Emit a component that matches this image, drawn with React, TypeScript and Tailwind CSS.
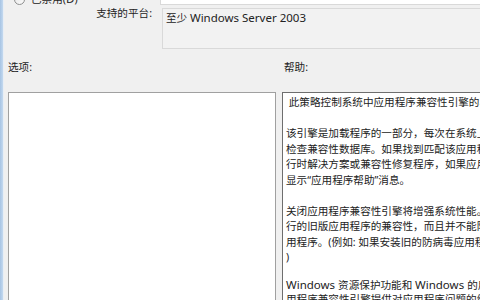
const helpLines = [
  ' 此策略控制系统中应用程序兼容性引擎的状态。',
  '',
  '该引擎是加载程序的一部分，每次在系统上启动应用程序时，该引擎',
  '检查兼容性数据库。如果找到匹配该应用程序的项，该引擎将提供运',
  '行时解决方案或兼容性修复程序，如果应用程序存在已知问题，则会',
  '显示“应用程序帮助”消息。',
  '',
  '关闭应用程序兼容性引擎将增强系统性能。但是，这将降低许多常用',
  '行的旧版应用程序的兼容性，而且并不能阻止安装已知不兼容的应',
  '用程序。(例如: 如果安装旧的防病毒应用程序，可能导致蓝屏错误',
  ')',
  '',
  'Windows 资源保护功能和 Windows 的用户帐户控制功能都使用应',
  '用程序兼容性引擎提供对应用程序问题的缓解。',
];

// latin runs are drawn a bit larger than the CJK text, like Segoe UI next to YaHei
function Mixed({ text }: { text: string }) {
  const parts = text.split(/([A-Za-z0-9][A-Za-z0-9 ]*)/);
  return (
    <>
      {parts.map((p, i) =>
        /^[A-Za-z0-9]/.test(p) ? (
          <span key={i} className="text-[11.5px]">
            {p}
          </span>
        ) : (
          <span key={i}>{p}</span>
        )
      )}
    </>
  );
}

export default function App() {
  return (
    <div
      className="w-[480px] h-[300px] overflow-hidden flex bg-[#f0f0f0] text-[10.6px] text-[#222]"
      style={{ fontFamily: "'Noto Sans', 'Noto Sans CJK SC', sans-serif" }}
    >
      {/* window frame edge */}
      <div className="w-[3px] shrink-0 bg-gradient-to-r from-[#a7c4e4] to-[#c4d9ef]" />
      <div className="w-px shrink-0 bg-[#e8eef5]" />

      <div className="flex-1 flex flex-col min-w-0">
        {/* top: radio + bottom of comment box */}
        <div className="h-[5px] flex">
          <div className="w-[156px] flex items-center gap-[6px] pl-[10px] -mt-[8px] h-[14px]">
            <span className="w-[11px] h-[11px] rounded-full border border-[#8e8f8f] bg-gradient-to-br from-[#e6e6e6] to-[#fbfbfb]" />
            <span className="leading-none">
              <Mixed text="已禁用(D)" />
            </span>
          </div>
          <div className="flex-1 bg-white border-b border-l border-[#d9d9d9]" />
        </div>

        {/* supported platforms */}
        <div className="flex mt-[3px] h-[41px]">
          <div className="w-[148px] text-right -mt-[3px] leading-[16px]">支持的平台:</div>
          <div className="ml-[10px] flex-1 border border-r-0 border-[#d9d9d9] bg-[#f2f2f2] pl-[3px] pt-[1px] leading-[16px]">
            <Mixed text="至少 Windows Server 2003" />
          </div>
        </div>

        {/* section labels */}
        <div className="flex h-[43px] items-center pb-[6px]">
          <div className="w-[276px] pl-[4px]">选项:</div>
          <div className="pl-[4px]">帮助:</div>
        </div>

        {/* panes */}
        <div className="flex-1 flex min-h-0">
          <div className="ml-[4px] w-[268px] border border-b-0 border-[#a0a0a0] bg-white" />
          <div className="ml-[6px] flex-1 border border-r-0 border-b-0 border-[#6e6e6e] bg-white pl-[3px] pt-[2px] overflow-hidden">
            {helpLines.map((line, i) => (
              <div
                key={i}
                className={`whitespace-pre leading-[15.5px] ${i === 11 ? 'h-[11px]' : 'h-[15.5px]'}`}
              >
                <Mixed text={line} />
              </div>
            ))}
          </div>
        </div>
      </div>
    </div>
  );
}
